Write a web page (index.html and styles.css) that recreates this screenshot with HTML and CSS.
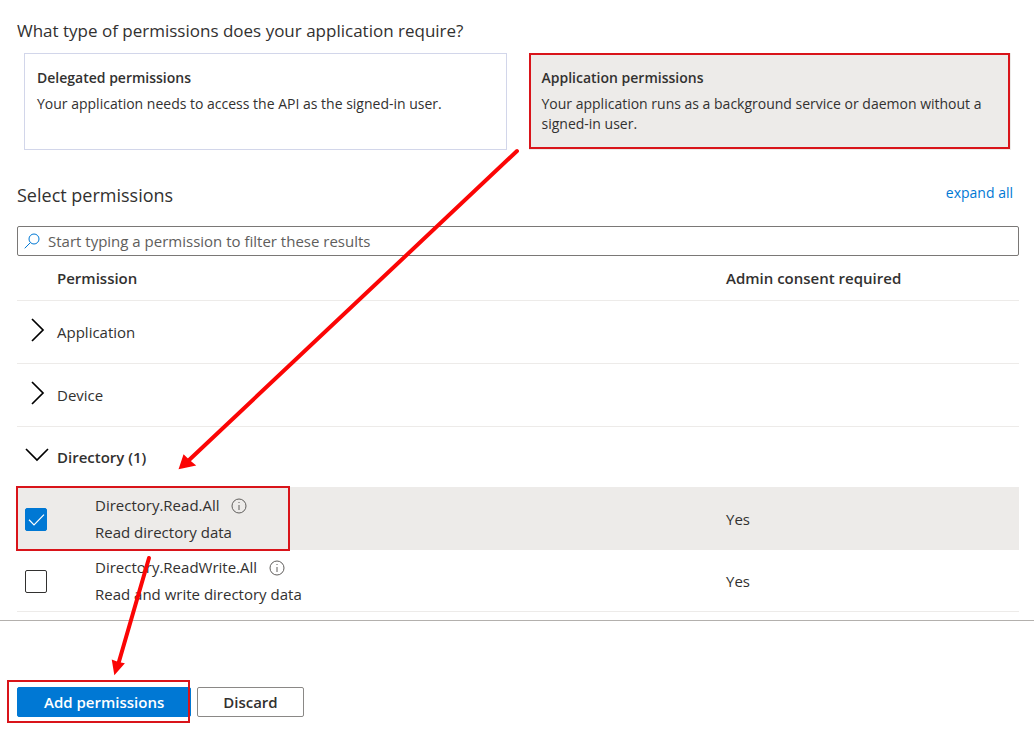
FILE: index.html
```html
<!DOCTYPE html>
<html lang="en">
<head>
    <meta charset="UTF-8">
    <meta name="viewport" content="width=device-width, initial-scale=1.0">
    <title>Request API permissions</title>
    <link rel="stylesheet" href="styles.css">
</head>
<body>

    <main class="panel">
        <h1 class="title">What type of permissions does your application require?</h1>

        <div class="types">
            <button type="button" class="type" aria-pressed="false">
                <strong>Delegated permissions</strong>
                <span>Your application needs to access the API as the signed-in user.</span>
            </button>
            <button type="button" class="type selected" aria-pressed="true">
                <strong>Application permissions</strong>
                <span>Your application runs as a background service or daemon without a signed-in user.</span>
            </button>
        </div>

        <div class="section-head">
            <h2 class="title section-title">Select permissions</h2>
            <a href="#permissions">expand all</a>
        </div>

        <label class="search">
            <svg width="16" height="16" viewBox="0 0 16 16" aria-hidden="true">
                <circle cx="10" cy="6" r="5"/>
                <path d="M6.4 9.6L.7 15.3"/>
            </svg>
            <input type="text" placeholder="Start typing a permission to filter these results" aria-label="Filter permissions">
        </label>

        <table class="permissions" id="permissions">
            <thead>
                <tr>
                    <th class="col-toggle"></th>
                    <th>Permission</th>
                    <th class="col-consent">Admin consent required</th>
                </tr>
            </thead>
            <tbody>
                <tr class="group">
                    <td>
                        <button type="button" class="toggle" aria-label="Expand Application" aria-expanded="false">
                            <svg width="24" height="24" viewBox="0 0 24 24"><path d="M7 1l11 11L7 23"/></svg>
                        </button>
                    </td>
                    <td colspan="2">Application</td>
                </tr>
                <tr class="group">
                    <td>
                        <button type="button" class="toggle" aria-label="Expand Device" aria-expanded="false">
                            <svg width="24" height="24" viewBox="0 0 24 24"><path d="M7 1l11 11L7 23"/></svg>
                        </button>
                    </td>
                    <td colspan="2">Device</td>
                </tr>
                <tr class="group open">
                    <td>
                        <button type="button" class="toggle" aria-label="Collapse Directory" aria-expanded="true">
                            <svg width="24" height="24" viewBox="0 0 24 24"><path d="M1 6l11 11L23 6"/></svg>
                        </button>
                    </td>
                    <td colspan="2">Directory (1)</td>
                </tr>
                <tr class="item checked">
                    <td><input type="checkbox" id="read-all" checked></td>
                    <td class="name">
                        <label for="read-all">Directory.Read.All</label>
                        <svg class="info" width="16" height="16" viewBox="0 0 16 16" aria-hidden="true">
                            <circle cx="8" cy="8" r="7"/>
                            <path d="M8 7v5M8 4v1"/>
                        </svg>
                        <div>Read directory data</div>
                    </td>
                    <td>Yes</td>
                </tr>
                <tr class="item">
                    <td><input type="checkbox" id="readwrite-all"></td>
                    <td class="name">
                        <label for="readwrite-all">Directory.ReadWrite.All</label>
                        <svg class="info" width="16" height="16" viewBox="0 0 16 16" aria-hidden="true">
                            <circle cx="8" cy="8" r="7"/>
                            <path d="M8 7v5M8 4v1"/>
                        </svg>
                        <div>Read and write directory data</div>
                    </td>
                    <td>Yes</td>
                </tr>
            </tbody>
        </table>
    </main>

    <footer class="actions">
        <button type="button" class="btn primary">Add permissions</button>
        <button type="button" class="btn">Discard</button>
    </footer>

    <!-- walkthrough marks -->
    <svg class="marks" width="1034" height="731" viewBox="0 0 1034 731" aria-hidden="true">
        <rect x="530" y="54" width="479" height="94"/>
        <rect x="17" y="487" width="272" height="63"/>
        <rect x="8" y="681" width="181" height="41"/>
        <path class="shaft" d="M517 151L187 462"/>
        <path class="head" d="M180 468l4-12 4 4 6 5z"/>
        <path class="shaft" d="M149 558L118 665"/>
        <path class="head" d="M115 673l-2-12 5 2 5 1z"/>
    </svg>

</body>
</html>
```
FILE: styles.css
```css
* {
    box-sizing: border-box;
}

body {
    margin: 0;
    position: relative;
    font-family: 'Segoe UI', 'Open Sans', 'Noto Sans', sans-serif;
    font-size: 14px;
    line-height: 20px;
    color: #323130;
    background-color: #ffffff;
}

button, input {
    font: inherit;
    color: inherit;
}

.panel {
    padding: 18px 15px 8px 17px;
}

.title {
    margin: 0;
    font-size: 17px;
    line-height: 26px;
    font-weight: 400;
}

.section-title {
    font-size: 18px;
}

.types {
    display: grid;
    grid-template-columns: 1fr 1fr;
    gap: 22px;
    margin: 9px 8px 32px 7px;
}

.type {
    display: flex;
    flex-direction: column;
    gap: 6px;
    min-height: 97px;
    padding: 14px 12px;
    border: 1px solid #d2d6ea;
    background-color: #ffffff;
    text-align: left;
    cursor: pointer;
}

.type strong {
    font-weight: 600;
}

.type.selected {
    background-color: #edebe9;
    border-color: #edebe9;
}

.section-head {
    display: flex;
    justify-content: space-between;
    margin-bottom: 18px;
    padding-right: 6px;
}

.section-head a {
    color: #0078d4;
    line-height: 22px;
    text-decoration: none;
}

.search {
    display: flex;
    align-items: center;
    gap: 8px;
    height: 30px;
    padding: 0 6px;
    border: 1px solid #7a7876;
    border-radius: 2px;
    font-size: 15px;
}

.search svg {
    fill: none;
    stroke: #0078d4;
}

.search input {
    flex: 1;
    padding: 0;
    border: none;
    outline: none;
    background: none;
}

.search input::placeholder {
    color: #605e5c;
    opacity: 1;
}

.permissions {
    width: 100%;
    border-collapse: separate;
    border-spacing: 0;
    table-layout: fixed;
    font-size: 15px;
}

.permissions th,
.permissions td {
    padding: 0;
    border-bottom: 1px solid #edebe9;
    text-align: left;
}

.permissions th {
    height: 45px;
    font-weight: 600;
}

.col-toggle {
    width: 40px;
}

.col-consent {
    width: 293px;
}

.permissions .group td {
    height: 63px;
}

.permissions .item td {
    height: 62px;
    padding-top: 1px;
}

.permissions .open td {
    height: 61px;
    font-weight: 600;
}

.item.checked td {
    background-color: #edebe9;
}

.toggle {
    display: block;
    padding: 0 8px 4px;
    border: none;
    background: none;
    cursor: pointer;
}

.toggle svg {
    display: block;
    fill: none;
    stroke: #000000;
    stroke-width: 1.7;
}

.permissions .name {
    padding-left: 38px;
    line-height: 27px;
}

.info {
    margin-left: 8px;
    vertical-align: -3px;
    fill: none;
    stroke: #605e5c;
}

.item input {
    appearance: none;
    display: block;
    width: 22px;
    height: 23px;
    margin: 0 8px;
    border: 1px solid #323130;
    border-radius: 2px;
}

.item input:checked {
    border-color: #0078d4;
    background: #0078d4 url("data:image/svg+xml,%3Csvg xmlns='http://www.w3.org/2000/svg' viewBox='0 0 22 22'%3E%3Cpath d='M4 11l5 5 10-10' fill='none' stroke='white' stroke-width='1.2'/%3E%3C/svg%3E") center / 22px no-repeat;
}

.actions {
    display: flex;
    gap: 6px;
    padding: 66px 17px 13px;
    border-top: 1px solid #b3b0ad;
}

.btn {
    height: 30px;
    padding: 0 25px;
    border: 1px solid #8a8886;
    border-radius: 2px;
    background-color: #ffffff;
    font-size: 15px;
    font-weight: 600;
    cursor: pointer;
}

.btn.primary {
    padding: 0 26px;
    border-color: #0078d4;
    background-color: #0078d4;
    color: #ffffff;
}

.marks {
    position: absolute;
    top: 0;
    left: 0;
    pointer-events: none;
}

.marks rect {
    fill: none;
    stroke: #d9141a;
    stroke-width: 2;
}

.marks .shaft {
    fill: none;
    stroke: #fb0505;
    stroke-width: 4;
    stroke-linecap: round;
}

.marks .head {
    fill: #fb0505;
    stroke: #fb0505;
    stroke-width: 2;
}
```
